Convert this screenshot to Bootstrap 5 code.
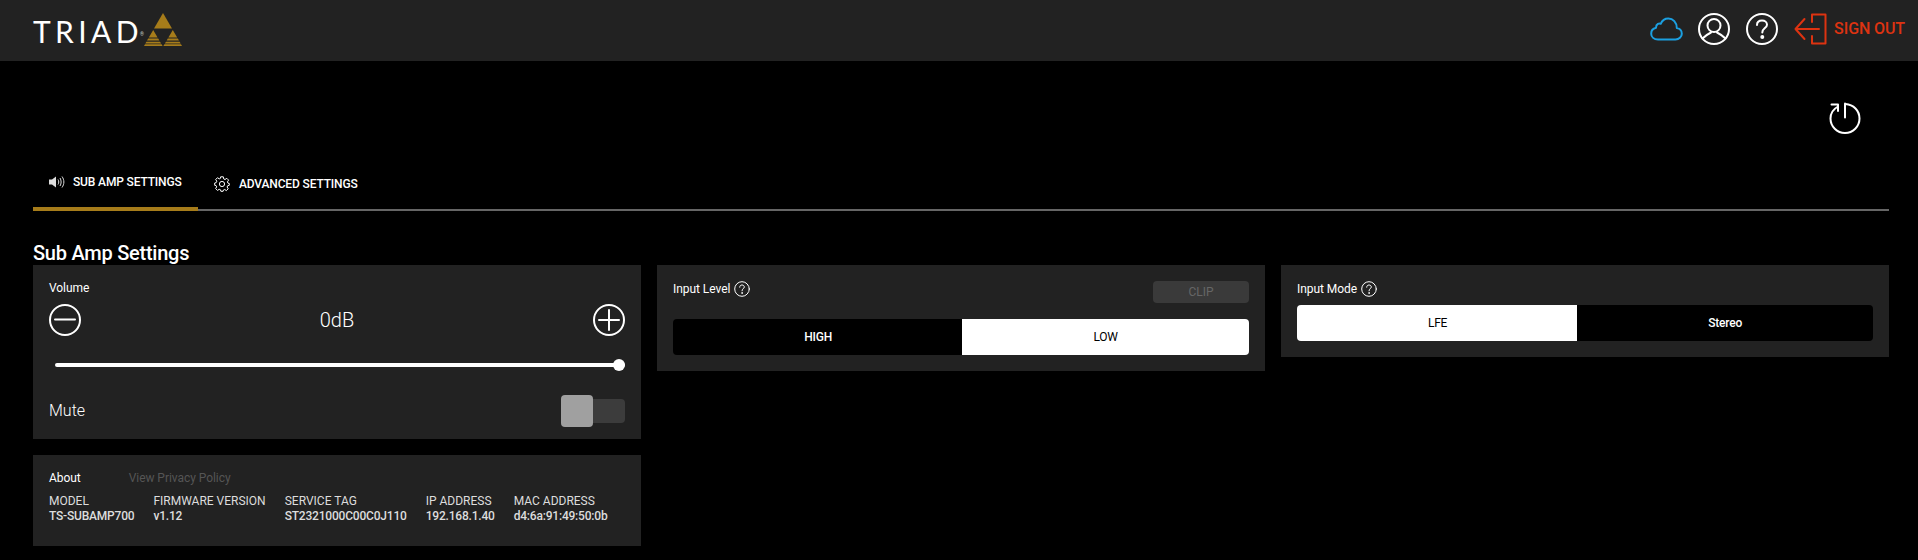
<!DOCTYPE html>
<html lang="en">
<head>
    <meta charset="UTF-8">
    <meta name="viewport" content="width=device-width, initial-scale=1">
    <title>Triad Sub Amp</title>
    <link rel="stylesheet" href="https://cdn.jsdelivr.net/npm/bootstrap@5.3.0/dist/css/bootstrap.min.css">
    <style>
        body {
            background: #000;
            color: #fff;
            font-family: Roboto, "Liberation Sans", sans-serif;
            font-size: 12px;
            overflow: hidden;
        }
        .topbar { height: 61px; background: #222; padding: 0 13px 3px 33px; }
        .brand-word {
            font-family: Lato, "Liberation Sans", sans-serif;
            font-weight: 400;
            font-size: 30px;
            line-height: 1;
            letter-spacing: 4.4px;
            margin: 3px -4px 0 0;
            color: #fff;
        }
        .brand-reg { font-size: 5px; line-height: 6px; color: #ccc; align-self: flex-start; margin: 19px 0 0 1px; }
        .brand-mark { margin: 1px 0 0 0; }
        .signout { color: #dd3311; font-size: 16px; font-weight: 500; letter-spacing: -.1px; }
        .icon-stroke { fill: none; stroke-width: 2; stroke-linecap: round; stroke-linejoin: round; }
        .page-body { padding: 41px 29px 0 33px; }
        .power-row { height: 30px; padding-right: 28px; }
        .tab-strip { height: 79px; border-bottom: 2px solid #666; margin-bottom: 0; }
        .tab-item { color: #fff; font-size: 12px; font-weight: 500; letter-spacing: -.15px; }
        .tab-active { width: 165px; height: 37px; padding: 0 0 18px 16px; margin-bottom: -2px; border-bottom: 4px solid #a67c1a; gap: 8px; }
        .tab-other { height: 37px; padding: 0 0 14px 16px; gap: 9px; }
        .page-title { font-size: 20px; font-weight: 500; line-height: 24px; margin: 30px 0 0; letter-spacing: -.25px; }
        .panel-box { background: #222; padding: 16px; }
        .volume-box { height: 174px; }
        .about-box { height: 91px; margin-top: 16px; }
        .field-label { line-height: 14px; font-size: 12px; letter-spacing: -.05px; }
        .volume-value { font-size: 20px; font-weight: 300; }
        .vol-range { height: 14px; display: block; margin: 22px 0 0 6px; width: calc(100% - 6px); }
        .vol-range::-webkit-slider-runnable-track { height: 4px; background: #fff; border-radius: 2px; }
        .vol-range::-webkit-slider-thumb { width: 12px; height: 12px; margin-top: -4px; background: #fff; border-radius: 50%; }
        .mute-label { font-size: 16px; font-weight: 300; }
        .mute-switch { width: 64px; height: 32px; }
        .mute-track { margin-left: 0; width: 64px; height: 24px; background: #3c3c3c; border-radius: 4px; }
        .mute-thumb { top: 0; left: 0; width: 32px; height: 32px; background: #a0a0a0; border-radius: 4px; }
        .about-grid { gap: 19px; margin-top: 9px; }
        .about-cell { line-height: 15px; color: #ddd; }
        .about-cell b { display: block; font-weight: 500; color: #ddd; letter-spacing: -.2px; }
        .privacy-link { color: #555; text-decoration: none; margin-left: 48px; }
        .clip-lamp { width: 96px; height: 22px; background: #3a3a3a; color: #666; border-radius: 4px; }
        .seg-group .btn {
            height: 36px;
            font-size: 12px;
            font-weight: 500;
            letter-spacing: -.2px;
            border: 0;
            background: #000;
            color: #fff;
            padding: 0;
            --bs-btn-border-radius: 4px;
        }
        .seg-group .btn.seg-on { background: #fff; color: #000; font-weight: 400; }
        .level-seg { margin-top: 16px; }
        .mode-seg { margin-top: 8px; }
        .hint-icon { margin-left: 4px; }
    </style>
</head>
<body>

    <!-- top bar -->
    <nav class="topbar d-flex align-items-center justify-content-between">
        <div class="d-flex align-items-center">
            <span class="brand-word">TRIAD</span>
            <span class="brand-reg">®</span>
            <svg class="brand-mark" width="38" height="33" viewBox="0 0 38 33">
                <path fill="#a67c1a" d="M19 0 28 15.5H10Z"/>
                <path fill="#a67c1a" d="M9.2 17 13.6 24.5H4.8ZM28.800 17 33.200 24.500H24.400Z"/>
                <path fill="#a67c1a" d="M4.200 25.500H14.200L15.300 27.500H3ZM23.800 25.500H33.800L35 27.500H22.700ZM2.400 28.700H16L17.200 30.500H1.300ZM22 28.700H35.600L36.700 30.500H20.800ZM1 31.200H17.600L18.600 33H0ZM20.400 31.200H37L38 33H19.400Z"/>
            </svg>
        </div>
        <div class="d-flex align-items-center">
            <svg width="33" height="24" viewBox="0 0 33 24" class="icon-stroke" stroke="#1b9fe0" style="margin-right:15px">
                <path d="M8 22.500H25.500C29 22.500 31.800 20 31.800 16.700 31.800 13.500 29.500 11.300 26.800 11 26.800 5.500 23 1.500 18.300 1.500 14.500 1.500 12 3.700 10.700 6.800 9.500 6 6 6.500 6 10.800 3 11.500 1.200 13.800 1.200 16.700 1.200 20 4 22.500 8 22.500Z"/>
            </svg>
            <svg width="32" height="32" viewBox="0 0 32 32" class="icon-stroke" stroke="#fff" style="margin-right:16px">
                <circle cx="16" cy="16" r="15"/>
                <circle cx="16" cy="12.500" r="6.500"/>
                <path d="M4.500 25.500C8 22 11 20.500 13 19.500M27.500 25.500C24 22 21 20.500 19 19.500"/>
            </svg>
            <svg width="32" height="32" viewBox="0 0 32 32" class="icon-stroke" stroke="#fff" style="margin-right:16px">
                <circle cx="16" cy="16" r="15"/>
                <path d="M11 12C11 9 13 7.500 16 7.500 19 7.500 21 9.300 21 11.700 21 15 16.300 15.300 16.300 19.500"/>
                <circle cx="16.300" cy="24" r="1" fill="#fff"/>
            </svg>
            <svg width="33" height="32" viewBox="0 0 33 32" class="icon-stroke" stroke="#dd3311" style="margin-right:7px">
                <path d="M18 9V1.500H31.500V30.500H18V23"/>
                <path d="M1.500 16H25M10.500 6 1.500 16 10.500 26"/>
            </svg>
            <span class="signout">SIGN OUT</span>
        </div>
    </nav>

    <div class="page-body">
        <div class="power-row d-flex justify-content-end">
            <svg width="32" height="32" viewBox="0 0 32 32" class="icon-stroke" stroke="#fff">
                <path d="M9 4.500C4.500 7 1.500 11 1.500 16.500 1.500 24.500 8 31 16 31 24 31 30.500 24.500 30.500 16.500 30.500 8.500 24.500 2.500 16.500 2"/>
                <path d="M16 1.500V15.500"/>
                <path d="M2.500 2.500H9V9"/>
            </svg>
        </div>

        <!-- tabs -->
        <div class="tab-strip d-flex align-items-end">
            <div class="tab-item tab-active d-flex align-items-center">
                <svg width="16" height="12" viewBox="0 0 16 12" fill="none" stroke="#ddd">
                    <path fill="#ddd" stroke="none" d="M0 3.500H3L7 .5V11.500L3 8.500H0Z"/>
                    <path d="M9 3.500C10 5 10 7 9 8.500M11 2C12.500 4.500 12.500 7.500 11 10M13 .5C15.500 4 15.500 8 13 11.500"/>
                </svg>
                <span>SUB AMP SETTINGS</span>
            </div>
            <div class="tab-item tab-other d-flex align-items-center">
                <svg width="16" height="16" viewBox="0 0 16 16" fill="none" stroke="#fff" stroke-width="1">
                    <circle cx="8" cy="8" r="2.600"/>
                    <path d="M6.700 .8H9.300L9.700 2.900 11 3.500 12.800 2.300 14.600 4.100 13.400 5.900 14 7.200 15.300 7.500V9.300L13.700 9.700 13.100 11 14.200 12.800 12.400 14.600 10.700 13.500 9.400 14 9.100 15.300H6.900L6.500 13.800 5.200 13.300 3.500 14.400 1.600 12.500 2.700 10.900 2.100 9.600.7 9.300V7L2.200 6.600 2.800 5.200 1.700 3.500 3.500 1.700 5.200 2.900 6.400 2.400Z"/>
                </svg>
                <span>ADVANCED SETTINGS</span>
            </div>
        </div>

        <h2 class="page-title">Sub Amp Settings</h2>

        <div class="row g-3 mt-0" style="--bs-gutter-y:0">
            <!-- volume + about -->
            <div class="col-4">
                <div class="panel-box volume-box">
                    <div class="field-label">Volume</div>
                    <div class="d-flex align-items-center justify-content-between" style="margin-top:9px">
                        <svg width="32" height="32" viewBox="0 0 32 32" class="icon-stroke" stroke="#fff">
                            <circle cx="16" cy="16" r="15"/><path d="M6 15.500H26"/>
                        </svg>
                        <span class="volume-value">0dB</span>
                        <svg width="32" height="32" viewBox="0 0 32 32" class="icon-stroke" stroke="#fff">
                            <circle cx="16" cy="16" r="15"/><path d="M6 16H26M16 6V26"/>
                        </svg>
                    </div>
                    <input type="range" class="form-range vol-range" min="-80" max="0" value="0">
                    <div class="d-flex align-items-center justify-content-between" style="margin-top:23px">
                        <span class="mute-label">Mute</span>
                        <div class="mute-switch position-relative d-flex align-items-center">
                            <div class="mute-track"></div>
                            <div class="mute-thumb position-absolute"></div>
                        </div>
                    </div>
                </div>
                <div class="panel-box about-box">
                    <div class="field-label">About<a href="#" class="privacy-link">View Privacy Policy</a></div>
                    <div class="about-grid d-flex">
                        <div class="about-cell">MODEL<b>TS-SUBAMP700</b></div>
                        <div class="about-cell">FIRMWARE VERSION<b>v1.12</b></div>
                        <div class="about-cell">SERVICE TAG<b>ST2321000C00C0J110</b></div>
                        <div class="about-cell">IP ADDRESS<b>192.168.1.40</b></div>
                        <div class="about-cell">MAC ADDRESS<b>d4:6a:91:49:50:0b</b></div>
                    </div>
                </div>
            </div>

            <!-- input level -->
            <div class="col-4">
                <div class="panel-box">
                    <div class="d-flex align-items-start justify-content-between">
                        <div class="d-flex align-items-center field-label">
                            Input Level
                            <svg class="hint-icon icon-stroke" width="16" height="16" viewBox="0 0 16 16" stroke="#fff" style="stroke-width:1">
                                <circle cx="8" cy="8" r="7.300"/>
                                <path d="M5.700 6.200C5.700 4.800 6.700 4 8 4 9.300 4 10.300 4.800 10.300 6 10.300 7.500 8 7.800 8 9.800"/>
                                <circle cx="8" cy="12" r=".4"/>
                            </svg>
                        </div>
                        <div class="clip-lamp d-flex align-items-center justify-content-center">CLIP</div>
                    </div>
                    <div class="btn-group w-100 seg-group level-seg" role="group">
                        <button type="button" class="btn">HIGH</button>
                        <button type="button" class="btn seg-on">LOW</button>
                    </div>
                </div>
            </div>

            <!-- input mode -->
            <div class="col-4">
                <div class="panel-box">
                    <div class="d-flex align-items-center field-label" style="height:16px">
                        Input Mode
                        <svg class="hint-icon icon-stroke" width="16" height="16" viewBox="0 0 16 16" stroke="#fff" style="stroke-width:1">
                            <circle cx="8" cy="8" r="7.300"/>
                            <path d="M5.700 6.200C5.700 4.800 6.700 4 8 4 9.300 4 10.300 4.800 10.300 6 10.300 7.500 8 7.800 8 9.800"/>
                            <circle cx="8" cy="12" r=".4"/>
                        </svg>
                    </div>
                    <div class="btn-group w-100 seg-group mode-seg" role="group">
                        <button type="button" class="btn seg-on">LFE</button>
                        <button type="button" class="btn">Stereo</button>
                    </div>
                </div>
            </div>
        </div>
    </div>

    <script src="https://cdn.jsdelivr.net/npm/bootstrap@5.3.0/dist/js/bootstrap.bundle.min.js"></script>
</body>
</html>
